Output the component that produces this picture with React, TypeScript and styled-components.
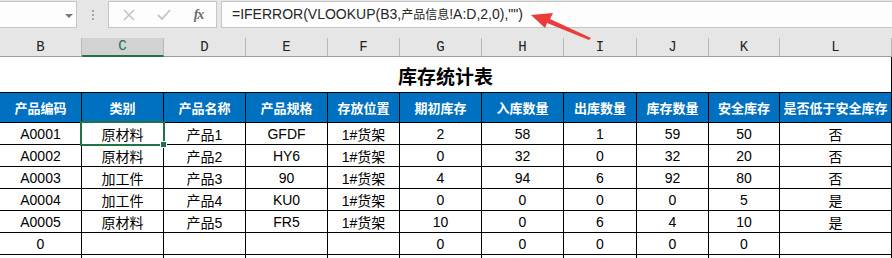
import * as React from 'react'
import styled, { createGlobalStyle } from 'styled-components'

const GlobalStyle = createGlobalStyle`
  html, body {
    margin: 0;
    padding: 0;
    background: #fff;
    overflow: hidden;
  }
`

const COLS = '82px 82px 82px 82px 72px 82px 82px 73px 72px 71px 112px'
const LETTERS = ['B', 'C', 'D', 'E', 'F', 'G', 'H', 'I', 'J', 'K', 'L']
const HEADERS = [
  '产品编码',
  '类别',
  '产品名称',
  '产品规格',
  '存放位置',
  '期初库存',
  '入库数量',
  '出库数量',
  '库存数量',
  '安全库存',
  '是否低于安全库存',
]

const ROWS: string[][] = [
  ['A0001', '原材料', '产品1', 'GFDF', '1#货架', '2', '58', '1', '59', '50', '否'],
  ['A0002', '原材料', '产品2', 'HY6', '1#货架', '0', '32', '0', '32', '20', '否'],
  ['A0003', '加工件', '产品3', '90', '1#货架', '4', '94', '6', '92', '80', '否'],
  ['A0004', '加工件', '产品4', 'KU0', '1#货架', '0', '0', '0', '0', '5', '是'],
  ['A0005', '原材料', '产品5', 'FR5', '1#货架', '10', '0', '6', '4', '10', '是'],
  ['0', '', '', '', '', '0', '0', '0', '0', '0', ''],
  ['', '', '', '', '', '', '', '', '', '', ''],
]

const Page = styled.div`
  position: relative;
  width: 892px;
  height: 258px;
  overflow: hidden;
  font-family: 'Liberation Sans', 'Noto Sans CJK SC', sans-serif;
`

const FormulaBar = styled.div`
  display: flex;
  align-items: flex-start;
  height: 38px;
  padding-top: 1px;
  box-sizing: border-box;
  background: #e6e6e6;
`

const NameBox = styled.div`
  position: relative;
  width: 77px;
  height: 27px;
  box-sizing: border-box;
  background: #fdfdfd;
  border: 1px solid #c6c6c6;
  border-left: none;
`

const DropDown = styled.span`
  position: absolute;
  left: 65px;
  top: 12px;
  width: 0;
  height: 0;
  border-left: 4px solid transparent;
  border-right: 4px solid transparent;
  border-top: 4px solid #7a7a7a;
`

const Grip = styled.div`
  width: 31px;
  height: 27px;
  display: flex;
  flex-direction: column;
  align-items: center;
  justify-content: center;
  gap: 2px;

  span {
    width: 2px;
    height: 2px;
    background: #a6a6a6;
  }
`

const ActionBox = styled.div`
  display: flex;
  align-items: center;
  width: 109px;
  height: 27px;
  box-sizing: border-box;
  background: #fdfdfd;
  border: 1px solid #c6c6c6;
`

const ActionIcon = styled.div`
  width: 36px;
  height: 25px;
  display: flex;
  align-items: center;
  justify-content: center;
`

const Fx = styled.span`
  font-family: 'Liberation Serif', serif;
  font-style: italic;
  font-weight: bold;
  font-size: 14px;
  color: #6e6e6e;
  letter-spacing: -1px;
`

const FormulaInput = styled.div`
  flex: 1;
  margin-left: 4px;
  height: 27px;
  box-sizing: border-box;
  background: #fdfdfd;
  border: 1px solid #c6c6c6;
  border-right: none;
  padding-left: 10px;
  font-size: 14px;
  line-height: 25px;
  color: #262626;
  white-space: nowrap;
`

const Cjk = styled.span`
  font-size: 12px;
`

const ColHeaderRow = styled.div`
  display: grid;
  grid-template-columns: ${COLS};
  height: 19px;
  background: #e6e6e6;
`

const ColHeader = styled.div<{ $active?: boolean }>`
  box-sizing: border-box;
  display: flex;
  align-items: flex-end;
  justify-content: center;
  padding-bottom: 1px;
  font-family: 'Liberation Mono', 'DejaVu Sans Mono', monospace;
  font-size: 14px;
  color: ${(p) => (p.$active ? '#217346' : '#222')};
  background: ${(p) => (p.$active ? '#d2d2d2' : '#e6e6e6')};
  border-bottom: ${(p) => (p.$active ? '2px solid #217346' : '1px solid #9e9e9e')};
  border-right: 1px solid #b8b8b8;
`

const Sheet = styled.div`
  display: grid;
  grid-template-columns: ${COLS};
  grid-template-rows: 36px 30px;
  grid-auto-rows: 22px;
`

const TitleCell = styled.div`
  grid-column: 1 / -1;
  box-sizing: border-box;
  display: flex;
  align-items: center;
  justify-content: center;
  border-right: 1px solid #000;
  border-bottom: 1px solid #000;
  font-size: 19px;
  font-weight: bold;
  color: #000;
  padding-top: 1px;
`

const HeadCell = styled.div`
  box-sizing: border-box;
  display: flex;
  align-items: center;
  justify-content: center;
  background: #0070c0;
  color: #fff;
  font-size: 13px;
  font-weight: bold;
  white-space: nowrap;
  border-right: 1px solid #000;
  border-bottom: 1px solid #000;
`

const Cell = styled.div<{ $selected?: boolean }>`
  position: relative;
  box-sizing: border-box;
  display: flex;
  align-items: center;
  justify-content: center;
  font-size: 14px;
  color: #000;
  white-space: nowrap;
  border-right: 1px solid #000;
  border-bottom: 1px solid #000;

  ${(p) =>
    p.$selected &&
    `
    &::after {
      content: '';
      position: absolute;
      left: -2px;
      top: -2px;
      right: -2px;
      bottom: -2px;
      border: 2px solid #217346;
      z-index: 2;
    }
    &::before {
      content: '';
      position: absolute;
      right: -4px;
      bottom: -4px;
      width: 5px;
      height: 5px;
      background: #217346;
      border: 1px solid #fff;
      z-index: 3;
    }
  `}
`

const Arrow = styled.svg`
  position: absolute;
  left: 0;
  top: 0;
  pointer-events: none;
`

export default function App() {
  return (
    <Page>
      <GlobalStyle />
      <FormulaBar>
        <NameBox>
          <DropDown />
        </NameBox>
        <Grip>
          <span />
          <span />
          <span />
        </Grip>
        <ActionBox>
          <ActionIcon style={{ marginLeft: 2 }}>
            <svg width="12" height="12" viewBox="0 0 12 12">
              <path d="M1 1 L11 11 M11 1 L1 11" stroke="#c4c4c4" strokeWidth="1.6" />
            </svg>
          </ActionIcon>
          <ActionIcon>
            <svg width="14" height="12" viewBox="0 0 14 12">
              <path d="M1 6 L5 10 L13 1" stroke="#c4c4c4" strokeWidth="1.8" fill="none" />
            </svg>
          </ActionIcon>
          <ActionIcon>
            <Fx>fx</Fx>
          </ActionIcon>
        </ActionBox>
        <FormulaInput>
          =IFERROR(VLOOKUP(B3,<Cjk>产品信息</Cjk>!A:D,2,0),"")
        </FormulaInput>
      </FormulaBar>

      <ColHeaderRow>
        {LETTERS.map((l) => (
          <ColHeader key={l} $active={l === 'C'}>
            {l}
          </ColHeader>
        ))}
      </ColHeaderRow>

      <Sheet>
        <TitleCell>库存统计表</TitleCell>
        {HEADERS.map((h) => (
          <HeadCell key={h}>{h}</HeadCell>
        ))}
        {ROWS.map((row, r) =>
          row.map((v, c) => (
            <Cell key={`${r}-${c}`} $selected={r === 0 && c === 1}>
              {v}
            </Cell>
          ))
        )}
      </Sheet>

      <Arrow width="892" height="60" viewBox="0 0 892 60">
        <polygon
          points="531,15 553,13 550,19 591,38 589,40 547,23 545,28"
          fill="#ec3b3b"
        />
      </Arrow>
    </Page>
  )
}
